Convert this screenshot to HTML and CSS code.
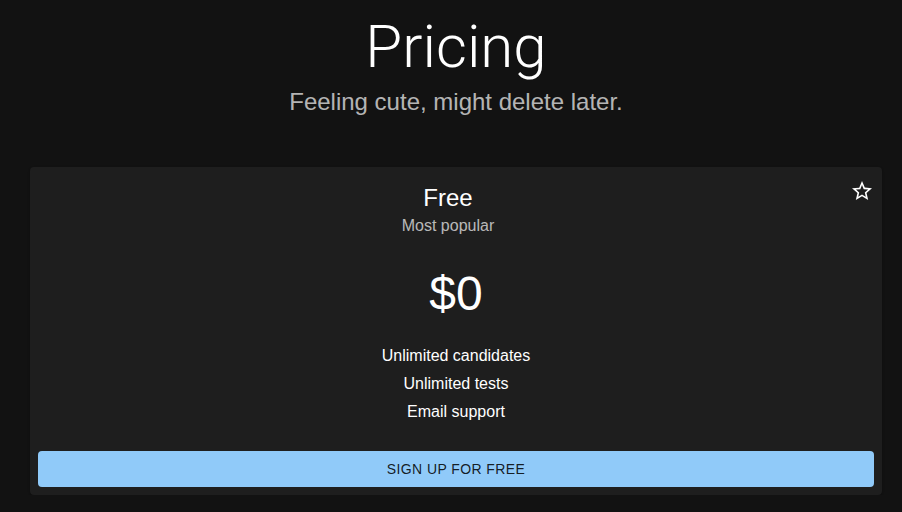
FILE: index.html
```html
<!DOCTYPE html>
<html lang="en">
<head>
  <meta charset="UTF-8" />
  <meta name="viewport" content="width=device-width, initial-scale=1" />
  <title>Pricing</title>
  <link rel="stylesheet" href="styles.css">
</head>
<body>

<header class="hero">
  <h1>Pricing</h1>
  <p class="subtitle">Feeling cute, might delete later.</p>
</header>

<main class="plans">
  <section class="card">
    <div class="card-header">
      <div class="card-title">
        <h2>Free</h2>
        <p class="subheader">Most popular</p>
      </div>
      <div class="card-action">
        <svg class="star" viewBox="0 0 24 24" width="24" height="24" aria-hidden="true">
          <path fill="currentColor" d="M22 9.24l-7.19-.62L12 2 9.19 8.63 2 9.24l5.46 4.73L5.82 21 12 17.27 18.18 21l-1.63-7.03L22 9.24zM12 15.4l-3.76 2.27 1-4.28-3.32-2.88 4.38-.38L12 6.1l1.71 4.04 4.38.38-3.32 2.88 1 4.28L12 15.4z"/>
        </svg>
      </div>
    </div>

    <div class="card-content">
      <div class="price">$0</div>
      <ul class="features">
        <li>Unlimited candidates</li>
        <li>Unlimited tests</li>
        <li>Email support</li>
      </ul>
    </div>

    <div class="card-actions">
      <button type="button">Sign up for free</button>
    </div>
  </section>
</main>

</body>
</html>
```

FILE: styles.css
```css
body {
  font-family: 'Liberation Sans', Arial, sans-serif;
  background: #121212;
  color: #fff;
  margin: 0;
}

.hero {
  text-align: center;
  padding: 11px 20px 0 30px;
}

h1 {
  margin: 0;
  font-family: Roboto, 'Liberation Sans', sans-serif;
  font-size: 60px;
  font-weight: 300;
  line-height: 72px;
}

.subtitle {
  margin: 3px 0 0;
  font-size: 24px;
  line-height: 32px;
  color: rgba(255, 255, 255, 0.7);
}

.plans {
  padding: 49px 20px 0 30px;
}

.card {
  background: #1e1e1e;
  border-radius: 4px;
  box-shadow: 0 2px 1px -1px rgba(0, 0, 0, 0.2), 0 1px 1px 0 rgba(0, 0, 0, 0.14), 0 1px 3px 0 rgba(0, 0, 0, 0.12);
  text-align: center;
}

.card-header {
  display: flex;
  align-items: flex-start;
  padding: 14.5px 16px 17.5px;
}

.card-title {
  flex: 1;
}

.card-header h2 {
  margin: 0;
  font-size: 24px;
  font-weight: 400;
  line-height: 32px;
}

.subheader {
  margin: 0;
  font-size: 16px;
  line-height: 24px;
  color: rgba(255, 255, 255, 0.7);
}

.card-action {
  margin: -2.5px -8px 0 0;
  line-height: 0;
}

.star {
  color: #fff;
}

.card-content {
  padding: 16px 16px 17.5px;
}

.price {
  font-size: 48px;
  line-height: 56px;
  margin: -5px 0 19.5px;
}

.features {
  list-style: none;
  margin: 0;
  padding: 0;
  font-size: 16px;
  line-height: 28px;
}

.card-actions {
  padding: 8px;
}

button {
  display: block;
  width: 100%;
  height: 36px;
  background-color: #90caf9;
  color: rgba(0, 0, 0, 0.87);
  border: none;
  border-radius: 4px;
  font-family: inherit;
  font-size: 14px;
  letter-spacing: 0.4px;
  text-transform: uppercase;
  cursor: pointer;
}
```
